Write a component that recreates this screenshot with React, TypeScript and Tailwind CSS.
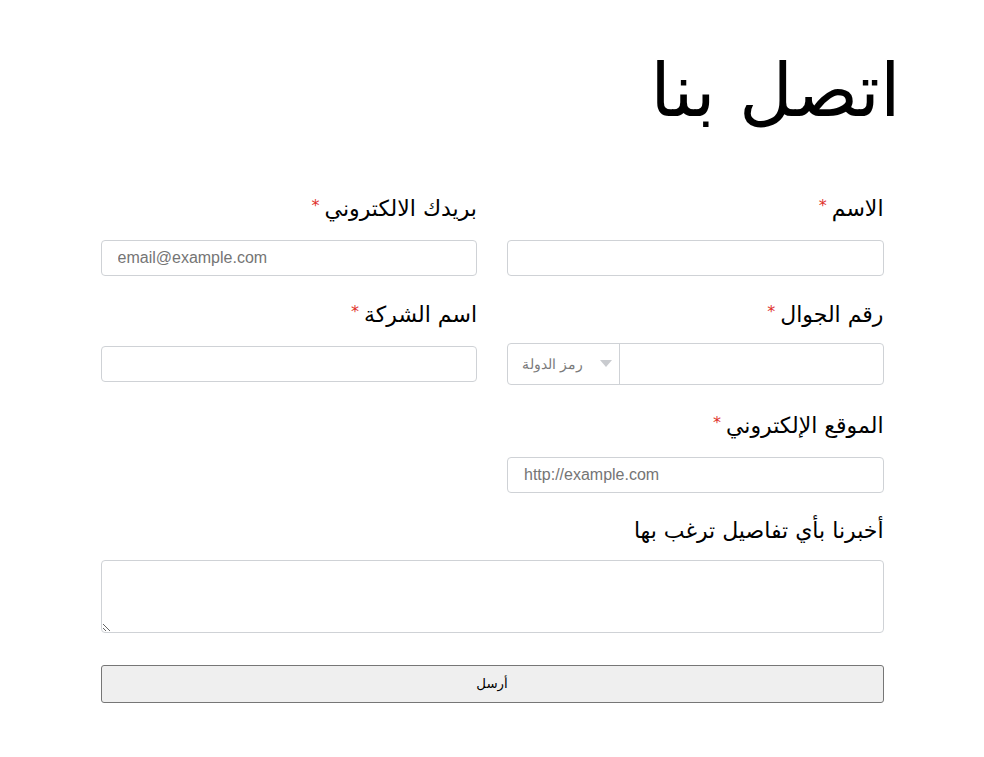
import React from "react";

function Star() {
  return <span className="relative -top-[5px] mr-[5px] text-[16px] text-[#e0312b]">*</span>;
}

function Label({ children, req = true, mb = "mb-[14px]" }: { children: React.ReactNode; req?: boolean; mb?: string }) {
  return (
    <div className={`text-[22px] leading-[30px] ${mb}`}>
      {children}
      {req && <Star />}
    </div>
  );
}

const inputCls =
  "block w-full h-[36px] border border-[#cfd2d6] rounded-[4px] px-4 text-[16px] font-['Liberation_Sans',Arial,sans-serif] text-left placeholder:text-[#757575] outline-none bg-white";

export default function App() {
  return (
    <div dir="rtl" className="min-h-screen bg-white font-['DejaVu_Sans',sans-serif] text-black">
      <div className="w-[783px] mx-auto pt-[47px] pb-10">
        <h1 className="text-[74px] leading-[86px] font-normal -mr-[17px] mb-[61px]">اتصل بنا</h1>
        <div className="grid grid-cols-2 gap-x-[30px]">
          <div className="mb-[24px]">
            <Label>الاسم</Label>
            <input dir="ltr" className={inputCls} />
          </div>
          <div className="mb-[24px]">
            <Label>بريدك الالكتروني</Label>
            <input dir="ltr" className={inputCls} placeholder="email@example.com" />
          </div>
          <div className="mb-[26px]">
            <Label mb="mb-[11px]">رقم الجوال</Label>
            <div dir="ltr" className="flex h-[42px] border border-[#cfd2d6] rounded-[4px] bg-white">
              <div className="w-[112px] shrink-0 border-r border-[#cfd2d6] flex items-center justify-between pl-[14px] pr-[7px]">
                <span dir="rtl" className="text-[14px] text-[#7a7a7a] font-['Liberation_Serif',serif]">رمز الدولة</span>
                <svg width="12" height="8" viewBox="0 0 12 8">
                  <polygon points="0,0 12,0 6,7" fill="#c9cbcf" />
                </svg>
              </div>
              <input className="flex-1 min-w-0 h-full px-4 outline-none bg-transparent text-[16px]" />
            </div>
          </div>
          <div className="mb-[26px]">
            <Label>اسم الشركة</Label>
            <input dir="ltr" className={inputCls} />
          </div>
          <div>
            <Label>الموقع الإلكتروني</Label>
            <input dir="ltr" className={inputCls} placeholder="http://example.com" />
          </div>
          <div />
        </div>
        <div className="mt-[23px]">
          <Label req={false}>أخبرنا بأي تفاصيل ترغب بها</Label>
          <textarea className="block w-full h-[73px] border border-[#cfd2d6] rounded-[4px] outline-none bg-white resize-y" />
        </div>
        <button className="mt-[32px] block w-full h-[38px] bg-[#efefef] border border-[#767676] rounded-[3px] text-[13.33px] text-black">
          أرسل
        </button>
      </div>
    </div>
  );
}
